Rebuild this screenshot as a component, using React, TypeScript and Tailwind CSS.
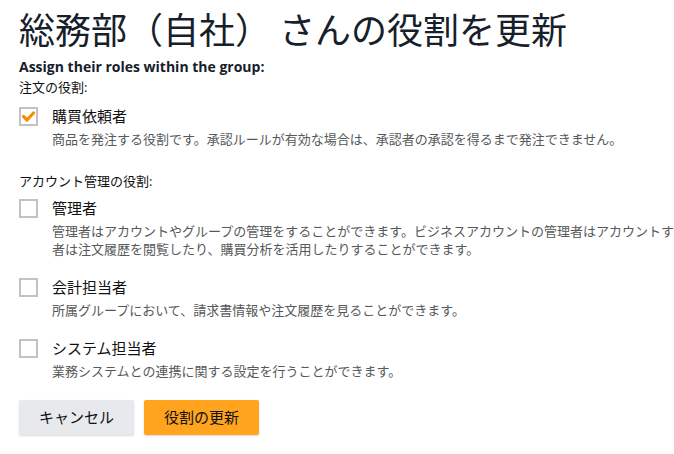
type Role = {
  label: string;
  desc: string[];
  checked?: boolean;
};

const orderRoles: Role[] = [
  {
    label: "購買依頼者",
    desc: ["商品を発注する役割です。承認ルールが有効な場合は、承認者の承認を得るまで発注できません。"],
    checked: true,
  },
];

const accountRoles: Role[] = [
  {
    label: "管理者",
    desc: [
      "管理者はアカウントやグループの管理をすることができます。ビジネスアカウントの管理者はアカウントす",
      "者は注文履歴を閲覧したり、購買分析を活用したりすることができます。",
    ],
  },
  {
    label: "会計担当者",
    desc: ["所属グループにおいて、請求書情報や注文履歴を見ることができます。"],
  },
  {
    label: "システム担当者",
    desc: ["業務システムとの連携に関する設定を行うことができます。"],
  },
];

const RoleRow = ({ role }: { role: Role }) => (
  <div className="flex items-start">
    <div className="mt-[1px] flex h-[19px] w-[19px] shrink-0 items-center justify-center border-2 border-[#c2c2c2] bg-white">
      {role.checked && (
        <svg width="15" height="15" viewBox="0 0 15 15">
          <polyline
            points="2.5,7.5 6,11 12.5,4"
            fill="none"
            stroke="#f39000"
            strokeWidth="3.2"
            strokeLinecap="round"
            strokeLinejoin="round"
          />
        </svg>
      )}
    </div>
    <div className="ml-[14px] min-w-0">
      <div className="text-[15px] leading-[20px] text-[#111]">{role.label}</div>
      <div className="mt-[4px] whitespace-nowrap text-[13px] leading-[18px] text-[#565959]">
        {role.desc.map((line) => (
          <div key={line}>{line}</div>
        ))}
      </div>
    </div>
  </div>
);

export default function App() {
  return (
    <div className="h-[454px] w-[674px] overflow-hidden bg-white px-[19px] pt-[6px] font-['Open_Sans','Noto_Sans_CJK_JP',sans-serif] text-[#0f1111]">
      <h1 className="text-[36px] leading-[44px] font-normal text-[#16202b] font-['Noto_Sans_CJK_JP',sans-serif]">
        総務部（自社） さんの役割を更新
      </h1>

      <p className="mt-[8px] text-[14px] font-bold leading-[18px] text-[#16202b]">Assign their roles within the group:</p>
      <p className="mt-[1px] text-[13px] leading-[20px]">注文の役割:</p>

      <div className="mt-[9px] flex flex-col">
        {orderRoles.map((r) => (
          <RoleRow key={r.label} role={r} />
        ))}
      </div>

      <p className="mt-[23px] text-[13px] leading-[20px]">アカウント管理の役割:</p>

      <div className="mt-[7px] flex flex-col gap-[19px]">
        {accountRoles.map((r) => (
          <RoleRow key={r.label} role={r} />
        ))}
      </div>

      <div className="mt-[20px] flex gap-[10px]">
        <button className="h-[35px] w-[115px] rounded-[2px] bg-[#e7e9ec] text-[15px] text-[#111] shadow-[0_1px_2px_rgba(0,0,0,0.15)]">
          キャンセル
        </button>
        <button className="h-[35px] w-[115px] rounded-[2px] bg-[#ffa41c] text-[15px] text-[#111] shadow-[0_1px_2px_rgba(0,0,0,0.15)]">
          役割の更新
        </button>
      </div>
    </div>
  );
}
